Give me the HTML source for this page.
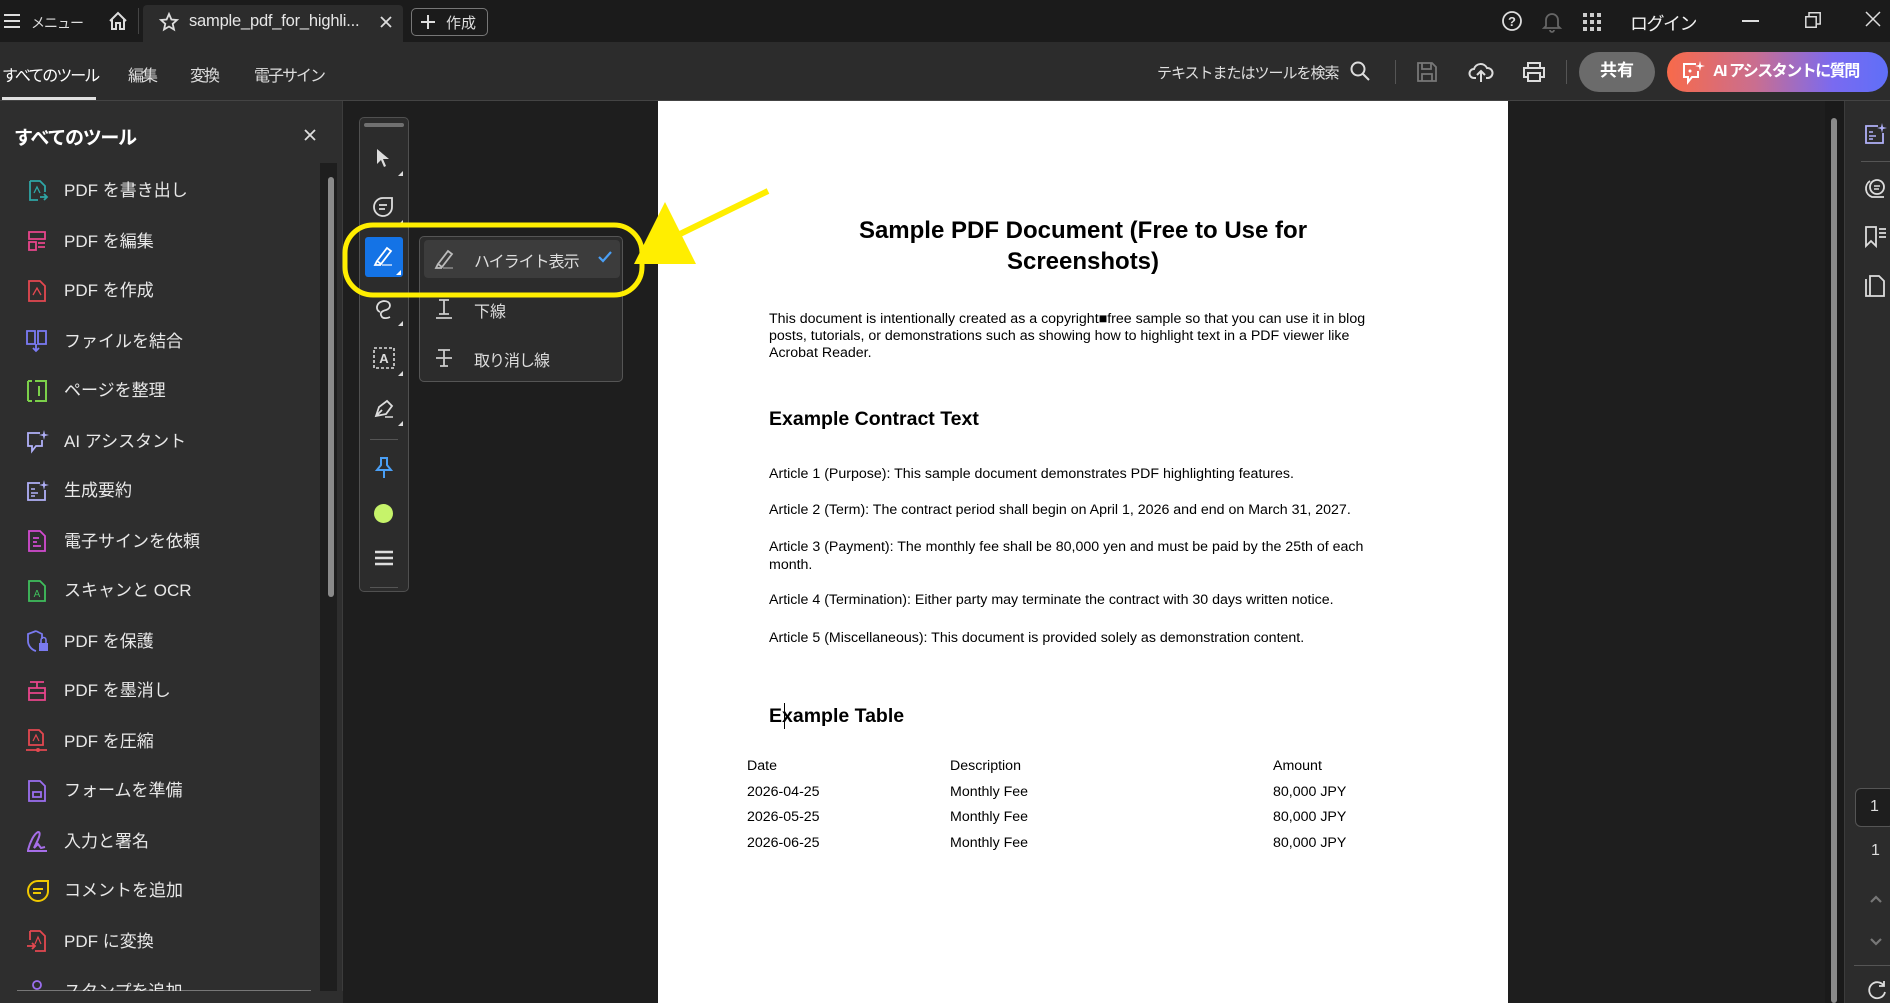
<!DOCTYPE html>
<html><head><meta charset="utf-8">
<style>
*{margin:0;padding:0;box-sizing:border-box}
body{width:1890px;height:1003px;overflow:hidden;background:#1e1e1e;font-family:"Liberation Sans","Noto Sans CJK JP",sans-serif;color:#e6e6e6;position:relative}
.a{position:absolute;white-space:nowrap}
svg{position:absolute;overflow:visible}
.pdf{position:absolute;left:658px;top:101px;width:850px;height:902px;background:#fff;color:#000;font-family:"Liberation Sans",Arial,sans-serif}
.pdf .a{color:#000}
.p{font-size:14.2px}
.item{position:absolute;left:64px;font-size:17px;color:#e8e8e8;line-height:20px}
.nav{font-size:16px;letter-spacing:-2px;top:62px}
</style></head><body>
<!-- title bar -->
<div class="a" style="left:0;top:0;width:1890px;height:42px;background:#1b1b1b"></div>
<div class="a" style="left:143px;top:5px;width:260px;height:37px;background:#2c2c2c;border-radius:4px 4px 0 0"></div>
<svg style="left:4px;top:14px" width="16" height="14"><path d="M0 1H16M0 7H16M0 13H16" stroke="#ddd" stroke-width="2"/></svg>
<div class="a" style="left:31px;top:13px;font-size:14px;color:#ddd;letter-spacing:-1px">メニュー</div>
<svg style="left:108px;top:11px" width="20" height="20"><path d="M2 10L10 2L18 10M4 8V18H8V12H12V18H16V8" stroke="#ddd" stroke-width="2" fill="none"/></svg>
<div class="a" style="left:138px;top:8px;width:1px;height:26px;background:#444"></div>
<svg style="left:160px;top:13px" width="18" height="18"><path d="M9 1L11.4 6.5L17 7L12.7 10.8L14 16.5L9 13.5L4 16.5L5.3 10.8L1 7L6.6 6.5Z" stroke="#ddd" stroke-width="1.8" fill="none"/></svg>
<div class="a" style="left:189px;top:12px;font-size:16.5px;color:#e6e6e6;letter-spacing:-0.2px">sample_pdf_for_highli...</div>
<svg style="left:381px;top:17px" width="10" height="10"><path d="M0 0L10 10M10 0L0 10" stroke="#ddd" stroke-width="1.8"/></svg>
<div class="a" style="left:411px;top:8px;width:77px;height:28px;border:1.5px solid #777;border-radius:5px"></div>
<svg style="left:421px;top:15px" width="14" height="14"><path d="M7 0V14M0 7H14" stroke="#ddd" stroke-width="2"/></svg>
<div class="a" style="left:446px;top:12px;font-size:15px;color:#ddd">作成</div>
<svg style="left:1502px;top:11px" width="20" height="20"><circle cx="10" cy="10" r="9" stroke="#ddd" stroke-width="1.8" fill="none"/><text x="10" y="15" font-size="13" font-weight="bold" fill="#ddd" text-anchor="middle" font-family="Liberation Sans">?</text></svg>
<svg style="left:1543px;top:11px" width="18" height="22"><path d="M3 15V9A6 6 0 0 1 15 9V15L17 17H1Z M7 19A2 2 0 0 0 11 19" stroke="#666" stroke-width="1.8" fill="none"/></svg>
<svg style="left:1583px;top:13px" width="18" height="18"><g fill="#ccc"><rect x="0" y="0" width="4" height="4"/><rect x="7" y="0" width="4" height="4"/><rect x="14" y="0" width="4" height="4"/><rect x="0" y="7" width="4" height="4"/><rect x="7" y="7" width="4" height="4"/><rect x="14" y="7" width="4" height="4"/><rect x="0" y="14" width="4" height="4"/><rect x="7" y="14" width="4" height="4"/><rect x="14" y="14" width="4" height="4"/></g></svg>
<div class="a" style="left:1630px;top:10px;font-size:18px;color:#f0f0f0;letter-spacing:-1.5px">ログイン</div>
<div class="a" style="left:1742px;top:20px;width:17px;height:1.5px;background:#ddd"></div>
<svg style="left:1805px;top:12px" width="16" height="16"><path d="M0.8 4.8H11.2V15.2H0.8Z M4 4.8V0.8H15.2V12H11.2" stroke="#ddd" stroke-width="1.5" fill="none"/></svg>
<svg style="left:1866px;top:12px" width="14" height="14"><path d="M0 0L14 14M14 0L0 14" stroke="#ddd" stroke-width="1.5"/></svg>
<!-- toolbar -->
<div class="a" style="left:0;top:42px;width:1890px;height:59px;background:#2c2c2c;border-bottom:1px solid #444"></div>
<div class="a nav" style="left:2px;color:#fff">すべてのツール</div>
<div class="a" style="left:2px;top:97px;width:94px;height:3px;background:#e0e0e0"></div>
<div class="a nav" style="left:128px;color:#ddd">編集</div>
<div class="a nav" style="left:190px;color:#ddd">変換</div>
<div class="a nav" style="left:254px;color:#ddd">電子サイン</div>
<div class="a" style="left:1157px;top:62px;font-size:15px;color:#e0e0e0;letter-spacing:-1px">テキストまたはツールを検索</div>
<svg style="left:1350px;top:61px" width="20" height="20"><circle cx="8" cy="8" r="6.5" stroke="#ddd" stroke-width="2" fill="none"/><path d="M13 13L19 19" stroke="#ddd" stroke-width="2"/></svg>
<div class="a" style="left:1395px;top:60px;width:1px;height:24px;background:#555"></div>
<svg style="left:1417px;top:62px" width="20" height="20"><path d="M1 1H15L19 5V19H1Z M5 1V7H14V1 M5 19V12H15V19" stroke="#777" stroke-width="1.8" fill="none"/></svg>
<svg style="left:1469px;top:61px" width="24" height="22"><path d="M7 17H5A4.5 4.5 0 0 1 5 8A7 7 0 0 1 18 7A5 5 0 0 1 19 17H17 M12 21V10M8 14L12 10L16 14" stroke="#ddd" stroke-width="2" fill="none"/></svg>
<svg style="left:1523px;top:62px" width="22" height="20"><path d="M5 6V1H17V6 M5 15H1V6H21V15H17 M5 11H17V19H5Z" stroke="#ddd" stroke-width="2" fill="none"/></svg>
<div class="a" style="left:1566px;top:60px;width:1px;height:24px;background:#555"></div>
<div class="a" style="left:1579px;top:52px;width:76px;height:40px;background:#6b6b6b;border-radius:20px"></div>
<div class="a" style="left:1600px;top:61px;font-size:17px;line-height:20px;font-weight:bold;color:#fff">共有</div>
<div class="a" style="left:1667px;top:52px;width:221px;height:40px;border-radius:20px;background:linear-gradient(90deg,#f86a4a 0%,#c96e90 40%,#7a6af0 75%,#5f6ff8 100%)"></div>
<svg style="left:1682px;top:61px" width="24" height="24"><path d="M14 3H2V16H6V21L10 16H16V10" stroke="#fff" stroke-width="2" fill="none"/><path d="M18 0L19 4L23 5L19 6L18 10L17 6L13 5L17 4Z" fill="#fff"/><circle cx="8" cy="10" r="1.5" fill="#fff"/></svg>
<div class="a" style="left:1713px;top:62px;font-size:16px;line-height:20px;font-weight:bold;color:#fff;letter-spacing:-1.5px">AI アシスタントに質問</div>
<!-- left panel -->
<div class="a" style="left:0;top:101px;width:343px;height:902px;background:#2e2e2e;border-right:1px solid #3c3c3c"></div>
<div class="a" style="left:14px;top:123px;font-size:19px;font-weight:bold;color:#fff;letter-spacing:-1.3px">すべてのツール</div>
<svg style="left:305px;top:130px" width="10" height="10"><path d="M0 0L10 10M10 0L0 10" stroke="#ddd" stroke-width="1.8"/></svg>
<div class="a" style="left:320px;top:163px;width:17px;height:828px;background:#1e1e1e"></div>
<div class="a" style="left:328px;top:177px;width:6px;height:420px;background:#8a8a8a;border-radius:3px"></div>
<div class="a" style="left:17px;top:990px;width:294px;height:1px;background:#777"></div>
<!-- icons -->
<svg style="left:28px;top:180px" width="20" height="22"><path d="M2 1H12L17 6V12 M2 1V20H10" stroke="#2fa5a5" stroke-width="1.8" fill="none"/><path d="M12 17H19M16 14L19 17L16 20" stroke="#2fa5a5" stroke-width="1.8" fill="none"/><path d="M6 13L9 7L12 13" stroke="#2fa5a5" stroke-width="1.3" fill="none"/></svg>
<svg style="left:28px;top:231px" width="18" height="20"><path d="M1 1H17V8H1Z M1 11H8V19H1Z M10 12H17M10 16H17" stroke="#e8458b" stroke-width="1.8" fill="none"/></svg>
<svg style="left:28px;top:280px" width="18" height="22"><path d="M1 1H12L17 6V21H1Z" stroke="#e34850" stroke-width="1.8" fill="none"/><path d="M5 15L9 8L13 15" stroke="#e34850" stroke-width="1.3" fill="none"/></svg>
<svg style="left:26px;top:330px" width="22" height="22"><path d="M1 1H9V14H1Z M12 1H20V14H12Z M10 14V21M7 18L10 21L13 18" stroke="#7b7bf5" stroke-width="1.8" fill="none"/></svg>
<svg style="left:27px;top:380px" width="20" height="22"><path d="M8 1H19V21H8 M1 1H5M1 21H5 M1 1V21" stroke="#7bd04a" stroke-width="2" fill="none"/><path d="M12 6V16" stroke="#7bd04a" stroke-width="2"/></svg>
<svg style="left:26px;top:430px" width="22" height="22"><path d="M14 3H2V16H6V21L10 16H16V10" stroke="#b0b0f8" stroke-width="1.8" fill="none"/><path d="M18 0L19 4L23 5L19 6L18 10L17 6L13 5L17 4Z" fill="#b0b0f8"/></svg>
<svg style="left:26px;top:480px" width="22" height="22"><path d="M14 3H2V20H19V10" stroke="#b0b0f8" stroke-width="1.8" fill="none"/><path d="M5 9H9M5 13H12M5 16H9" stroke="#b0b0f8" stroke-width="1.6"/><path d="M18 0L19 4L23 5L19 6L18 10L17 6L13 5L17 4Z" fill="#b0b0f8"/></svg>
<svg style="left:28px;top:530px" width="18" height="22"><path d="M1 1H12L17 6V21H1Z M5 8H11M5 12H9M5 16H13" stroke="#d24bd0" stroke-width="1.8" fill="none"/></svg>
<svg style="left:28px;top:580px" width="18" height="22"><path d="M1 1H12L17 6V21H1Z" stroke="#3fbf5c" stroke-width="1.8" fill="none"/><text x="9" y="17" font-size="10" fill="#3fbf5c" text-anchor="middle" font-family="Liberation Sans">A</text></svg>
<svg style="left:27px;top:630px" width="22" height="22"><path d="M9 1L1 4V11C1 16 5 20 9 21 M9 1L15 4V9" stroke="#7a7af0" stroke-width="1.8" fill="none"/><rect x="12" y="13" width="9" height="8" fill="#7a7af0"/><path d="M14 13V10A2.5 2.5 0 0 1 19 10V13" stroke="#7a7af0" stroke-width="1.6" fill="none"/></svg>
<svg style="left:27px;top:680px" width="20" height="22"><path d="M3 2H17M10 2V8 M2 8H18V20H2Z M2 13H18" stroke="#e8458b" stroke-width="1.8" fill="none"/></svg>
<svg style="left:26px;top:729px" width="22" height="24"><path d="M3 1H13L17 5V16H3Z" stroke="#e34850" stroke-width="1.8" fill="none"/><path d="M0 21H21" stroke="#e34850" stroke-width="1.8"/><circle cx="12" cy="21" r="2" fill="#e34850"/><path d="M7 12L10 6L13 12" stroke="#e34850" stroke-width="1.2" fill="none"/></svg>
<svg style="left:28px;top:780px" width="18" height="22"><path d="M1 1H12L17 6V21H1Z M5 12H13V17H5Z" stroke="#9b6ef0" stroke-width="1.8" fill="none"/></svg>
<svg style="left:26px;top:830px" width="22" height="22"><path d="M2 20C4 12 8 4 12 2C16 2 12 10 8 18L12 14L15 18L19 17 M1 21H21" stroke="#a66ee8" stroke-width="2" fill="none"/></svg>
<svg style="left:27px;top:880px" width="22" height="22"><path d="M11 1A10 10 0 1 0 21 11V1Z" stroke="#f0c800" stroke-width="2" fill="none"/><path d="M6 9H16M6 13H14" stroke="#f0c800" stroke-width="2"/></svg>
<svg style="left:27px;top:930px" width="20" height="22"><path d="M3 1H13L18 6V21H8 M3 1V10" stroke="#e34850" stroke-width="1.8" fill="none"/><path d="M0 16H8M5 13L8 16L5 19" stroke="#e34850" stroke-width="1.8" fill="none"/><path d="M8 14L11 7L14 14" stroke="#e34850" stroke-width="1.2" fill="none"/></svg>
<svg style="left:30px;top:980px" width="14" height="12"><circle cx="7" cy="5" r="4" stroke="#9b6ef0" stroke-width="1.8" fill="none"/></svg>
<div class="item" style="top:181px">PDF を書き出し</div>
<div class="item" style="top:232px">PDF を編集</div>
<div class="item" style="top:281px">PDF を作成</div>
<div class="item" style="top:332px">ファイルを結合</div>
<div class="item" style="top:381px">ページを整理</div>
<div class="item" style="top:432px">AI アシスタント</div>
<div class="item" style="top:481px">生成要約</div>
<div class="item" style="top:532px">電子サインを依頼</div>
<div class="item" style="top:581px">スキャンと OCR</div>
<div class="item" style="top:632px">PDF を保護</div>
<div class="item" style="top:681px">PDF を墨消し</div>
<div class="item" style="top:732px">PDF を圧縮</div>
<div class="item" style="top:781px">フォームを準備</div>
<div class="item" style="top:832px">入力と署名</div>
<div class="item" style="top:881px">コメントを追加</div>
<div class="item" style="top:932px">PDF に変換</div>
<div class="item" style="top:982px;height:9px;overflow:hidden">スタンプを追加</div>
<div class="a" style="left:0;top:991px;width:343px;height:12px;background:#2e2e2e"></div>
<!-- floating tool bar -->
<div class="a" style="left:359px;top:117px;width:50px;height:475px;background:#2c2c2c;border:1px solid #505050;border-radius:5px"></div>
<div class="a" style="left:364px;top:123px;width:40px;height:4px;background:#707070;border-radius:2px"></div>
<svg style="left:376px;top:148px" width="16" height="20"><path d="M1 1L1 16L5 12L8 19L10 18L7 11L13 11Z" fill="#ddd"/></svg>
<svg style="left:373px;top:197px" width="22" height="22"><path d="M10 1A9 9 0 1 0 19 10V1Z" stroke="#ddd" stroke-width="1.8" fill="none"/><path d="M6 8H14M6 12H12" stroke="#ddd" stroke-width="1.8"/></svg>
<div class="a" style="left:365px;top:237px;width:38px;height:40px;background:#1473e6;border-radius:3px"></div>
<svg style="left:373px;top:245px" width="22" height="22"><path d="M4 16L14 3L18 6L8 19Z M4 16L2 20H8" stroke="#fff" stroke-width="1.8" fill="none"/><path d="M9 20H19" stroke="#9cc3f5" stroke-width="2"/></svg>
<svg style="left:374px;top:298px" width="20" height="22"><path d="M6 14C1 12 2 4 10 3C17 3 18 10 12 12C8 13 5 15 8 19C10 21 14 20 16 19" stroke="#ddd" stroke-width="1.8" fill="none"/></svg>
<svg style="left:373px;top:347px" width="22" height="22"><rect x="1" y="1" width="20" height="20" stroke="#ddd" stroke-width="1.6" fill="none" stroke-dasharray="3 2"/><text x="11" y="16" font-size="13" font-weight="bold" fill="#ddd" text-anchor="middle" font-family="Liberation Sans">A</text></svg>
<svg style="left:373px;top:398px" width="22" height="22"><path d="M3 18L6 9L14 3L19 8L13 16Z M3 18L9 12" stroke="#ddd" stroke-width="1.8" fill="none"/><path d="M12 19H20" stroke="#ddd" stroke-width="1.5"/></svg>
<svg style="left:398px;top:171px" width="5" height="5"><path d="M5 0V5H0Z" fill="#ddd"/></svg>
<svg style="left:398px;top:220px" width="5" height="5"><path d="M5 0V5H0Z" fill="#ddd"/></svg>
<svg style="left:396px;top:270px" width="5" height="5"><path d="M5 0V5H0Z" fill="#fff"/></svg>
<svg style="left:398px;top:321px" width="5" height="5"><path d="M5 0V5H0Z" fill="#ddd"/></svg>
<svg style="left:398px;top:371px" width="5" height="5"><path d="M5 0V5H0Z" fill="#ddd"/></svg>
<svg style="left:398px;top:421px" width="5" height="5"><path d="M5 0V5H0Z" fill="#ddd"/></svg>
<div class="a" style="left:370px;top:439px;width:28px;height:1px;background:#555"></div>
<svg style="left:376px;top:457px" width="16" height="22"><path d="M4 1H12M5 1V8L1 13H15L11 8V1 M8 13V21" stroke="#4a9ff5" stroke-width="2" fill="none"/></svg>
<div class="a" style="left:374px;top:504px;width:19px;height:19px;background:#c6f36a;border-radius:50%"></div>
<svg style="left:375px;top:550px" width="18" height="16"><path d="M0 2H18M0 8H18M0 14H18" stroke="#ddd" stroke-width="2.5"/></svg>
<div class="a" style="left:370px;top:587px;width:28px;height:1px;background:#555"></div>
<!-- popup -->
<div class="a" style="left:419px;top:236px;width:204px;height:146px;background:#2c2c2c;border:1px solid #555;border-radius:5px"></div>
<div class="a" style="left:424px;top:240px;width:196px;height:38px;background:#3c3c3c;border-radius:4px"></div>
<svg style="left:434px;top:248px" width="22" height="22"><path d="M4 16L14 3L18 6L8 19Z M4 16L2 20H8" stroke="#bbb" stroke-width="1.8" fill="none"/><path d="M9 20H19" stroke="#777" stroke-width="2"/></svg>
<div class="a" style="left:474px;top:248px;font-size:16px;color:#ddd;letter-spacing:-1px">ハイライト表示</div>
<svg style="left:598px;top:251px" width="14" height="12"><path d="M1 6L5 10L13 1" stroke="#4a9ff5" stroke-width="2.2" fill="none"/></svg>
<svg style="left:435px;top:298px" width="18" height="22"><path d="M4 2H14M9 2V16M4 16H14M1 20H17" stroke="#ccc" stroke-width="1.8" fill="none"/></svg>
<div class="a" style="left:474px;top:298px;font-size:16px;color:#ddd">下線</div>
<svg style="left:435px;top:348px" width="18" height="20"><path d="M3 2H15M9 2V18M5 18H13M1 10H17" stroke="#ccc" stroke-width="1.8" fill="none"/></svg>
<div class="a" style="left:474px;top:347px;font-size:16px;color:#ddd;letter-spacing:-1px">取り消し線</div>
<!-- pdf -->
<div class="pdf">
<div class="a" style="left:0;width:850px;top:114px;text-align:center;font-size:24px;font-weight:bold;line-height:31px;white-space:normal">Sample PDF Document (Free to Use for<br>Screenshots)</div>
<div class="a p" style="left:111px;top:210px;line-height:17px">This document is intentionally created as a copyright■free sample so that you can use it in blog<br>posts, tutorials, or demonstrations such as showing how to highlight text in a PDF viewer like<br>Acrobat Reader.</div>
<div class="a" style="left:111px;top:307px;font-size:19.5px;font-weight:bold">Example Contract Text</div>
<div class="a p" style="left:111px;top:365px">Article 1 (Purpose): This sample document demonstrates PDF highlighting features.</div>
<div class="a p" style="left:111px;top:401px">Article 2 (Term): The contract period shall begin on April 1, 2026 and end on March 31, 2027.</div>
<div class="a p" style="left:111px;top:437px;line-height:18px">Article 3 (Payment): The monthly fee shall be 80,000 yen and must be paid by the 25th of each<br>month.</div>
<div class="a p" style="left:111px;top:491px">Article 4 (Termination): Either party may terminate the contract with 30 days written notice.</div>
<div class="a p" style="left:111px;top:529px">Article 5 (Miscellaneous): This document is provided solely as demonstration content.</div>
<div class="a" style="left:111px;top:604px;font-size:19.5px;font-weight:bold">Example Table</div>
<div class="a" style="left:126px;top:602px;width:1px;height:26px;background:#000"></div>
<div class="a p" style="left:89px;top:657px">Date</div>
<div class="a p" style="left:292px;top:657px">Description</div>
<div class="a p" style="left:615px;top:657px">Amount</div>
<div class="a p" style="left:89px;top:683px">2026-04-25</div>
<div class="a p" style="left:292px;top:683px">Monthly Fee</div>
<div class="a p" style="left:615px;top:683px">80,000 JPY</div>
<div class="a p" style="left:89px;top:708px">2026-05-25</div>
<div class="a p" style="left:292px;top:708px">Monthly Fee</div>
<div class="a p" style="left:615px;top:708px">80,000 JPY</div>
<div class="a p" style="left:89px;top:734px">2026-06-25</div>
<div class="a p" style="left:292px;top:734px">Monthly Fee</div>
<div class="a p" style="left:615px;top:734px">80,000 JPY</div>
</div>
<!-- yellow annotations -->
<svg style="left:0;top:0" width="1890" height="1003">
<rect x="345" y="225" width="297" height="70" rx="28" ry="28" stroke="#ffee00" stroke-width="5" fill="none"/>
<path d="M768 191L680 234" stroke="#ffee00" stroke-width="6"/>
<path d="M665 202L634 264L696 264Z" fill="#ffee00"/>
</svg>
<!-- right side -->
<div class="a" style="left:1825px;top:101px;width:19px;height:902px;background:#1a1a1a"></div>
<div class="a" style="left:1831px;top:118px;width:6px;height:885px;background:#8a8a8a;border-radius:3px"></div>
<div class="a" style="left:1844px;top:101px;width:46px;height:902px;background:#2c2c2c;border-left:1px solid #3c3c3c"></div>
<svg style="left:1864px;top:123px" width="22" height="22"><path d="M14 3H2V20H19V10" stroke="#b0b0f8" stroke-width="1.8" fill="none"/><path d="M5 9H9M5 13H12M5 16H9" stroke="#b0b0f8" stroke-width="1.6"/><path d="M18 0L19 4L23 5L19 6L18 10L17 6L13 5L17 4Z" fill="#b0b0f8"/></svg>
<div class="a" style="left:1861px;top:161px;width:29px;height:1px;background:#555"></div>
<svg style="left:1864px;top:178px" width="22" height="20"><path d="M6 3A9 9 0 0 0 8 19H20" stroke="#ddd" stroke-width="1.8" fill="none"/><circle cx="13" cy="9" r="7" stroke="#ddd" stroke-width="1.8" fill="none"/><path d="M10 8H16M10 11H15" stroke="#ddd" stroke-width="1.5"/></svg>
<svg style="left:1865px;top:226px" width="22" height="22"><path d="M1 1H11V20L6 15L1 20Z M14 3H21M14 7H21M14 11H21" stroke="#ddd" stroke-width="1.8" fill="none"/></svg>
<svg style="left:1865px;top:275px" width="20" height="22"><path d="M5 1H14L19 6V21H5Z M1 4V21H5" stroke="#ddd" stroke-width="1.8" fill="none"/></svg>
<div class="a" style="left:1855px;top:788px;width:40px;height:39px;background:#1e1e1e;border:1px solid #555;border-radius:6px"></div>
<div class="a" style="left:1870px;top:798px;font-size:16px;color:#ddd">1</div>
<div class="a" style="left:1871px;top:842px;font-size:16px;color:#ddd">1</div>
<svg style="left:1870px;top:895px" width="12" height="8"><path d="M1 7L6 2L11 7" stroke="#777" stroke-width="2.2" fill="none"/></svg>
<svg style="left:1870px;top:938px" width="12" height="8"><path d="M1 1L6 6L11 1" stroke="#777" stroke-width="2.2" fill="none"/></svg>
<div class="a" style="left:1854px;top:965px;width:36px;height:1px;background:#555"></div>
<svg style="left:1867px;top:980px" width="20" height="20"><path d="M17 6A8 8 0 1 0 18 12 M17 1V6H12" stroke="#ddd" stroke-width="1.8" fill="none"/></svg>
</body></html>
